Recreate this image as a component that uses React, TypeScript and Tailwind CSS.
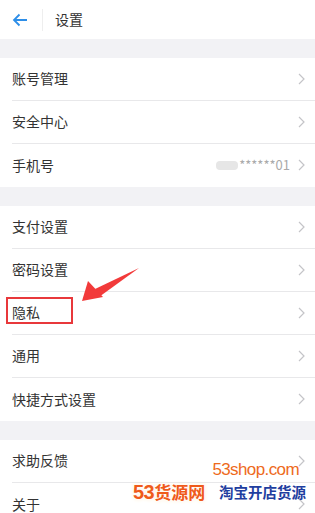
import React from 'react';

const sections: { label: string; value?: boolean; highlight?: boolean }[][] = [
  [{ label: '账号管理' }, { label: '安全中心' }, { label: '手机号', value: true }],
  [
    { label: '支付设置' },
    { label: '密码设置' },
    { label: '隐私', highlight: true },
    { label: '通用' },
    { label: '快捷方式设置' },
  ],
  [{ label: '求助反馈' }, { label: '关于' }],
];

function Chevron() {
  return (
    <svg width="7" height="12" viewBox="0 0 7 12" className="shrink-0">
      <path d="M1 1l5 5-5 5" fill="none" stroke="#c4c4c8" strokeWidth="1.2" />
    </svg>
  );
}

export default function App() {
  return (
    <div
      className="relative w-[315px] h-[513px] overflow-hidden bg-[#f2f2f5] text-[#333]"
      style={{ fontFamily: '"Noto Sans CJK SC", "Noto Sans", sans-serif' }}
    >
      {/* header */}
      <div className="h-[39px] bg-white flex items-center">
        <svg width="16" height="14" viewBox="0 0 16 14" className="ml-[12px]">
          <path d="M15 7H2M7.5 1.5L2 7l5.5 5.5" fill="none" stroke="#2d8ee8" strokeWidth="1.8" />
        </svg>
        <div className="w-px h-[22px] bg-[#eeeeee] ml-[14px]" />
        <span className="ml-[12px] text-[14px]">设置</span>
      </div>

      <div className="flex flex-col gap-[19px] pt-[19px]">
        {sections.map((rows, i) => (
          <div key={i} className="bg-white">
            {rows.map((row, j) => (
              <div key={row.label} className="pl-[12px]">
                <div
                  className={`h-[43px] flex items-center pr-[10px] pb-px ${
                    j < rows.length - 1 ? 'border-b border-[#e8e8ea]' : ''
                  }`}
                >
                  <span className="text-[14px] flex-1">{row.label}</span>
                  {row.value && (
                    <span className="flex items-center mr-[8px] text-[13px] text-[#aaa]">
                      <span className="w-[22px] h-[9px] bg-[#e6e6e6] rounded-sm mr-px" />
                      ******01
                    </span>
                  )}
                  <Chevron />
                </div>
              </div>
            ))}
          </div>
        ))}
      </div>

      {/* annotation */}
      <div className="absolute left-[6px] top-[297px] w-[67px] h-[27px] border-2 border-[#e8383b]" />
      <svg className="absolute left-0 top-0" width="315" height="513">
        <polygon points="139,268 95,289 99,297" fill="#f23a3a" />
        <polygon points="82,301 88,281 103,297" fill="#f23a3a" />
      </svg>

      {/* watermark */}
      <div className="absolute left-[133px] top-[459px] w-[173px] flex flex-col">
        <span
          className="self-end mr-[7px] text-[17px] leading-[21px] text-[#ee6a1c] tracking-[-0.6px]"
          style={{ fontFamily: '"Liberation Sans", sans-serif' }}
        >
          53shop.com
        </span>
        <div className="flex items-center justify-between mt-[2px]">
          <span
            className="text-[17px] font-bold text-[#ef5a1a] leading-[20px]"
            style={{ textShadow: '0 0 3px #fff, 0 0 3px #fff, 0 0 4px #ffe8c0' }}
          >
            <span className="text-[20px] tracking-[-0.5px]" style={{ fontFamily: '"Liberation Sans", sans-serif' }}>53</span>货源网
          </span>
          <span className="text-[14.5px] font-bold text-[#1f3ea0] leading-[20px]">淘宝开店货源</span>
        </div>
      </div>
    </div>
  );
}
